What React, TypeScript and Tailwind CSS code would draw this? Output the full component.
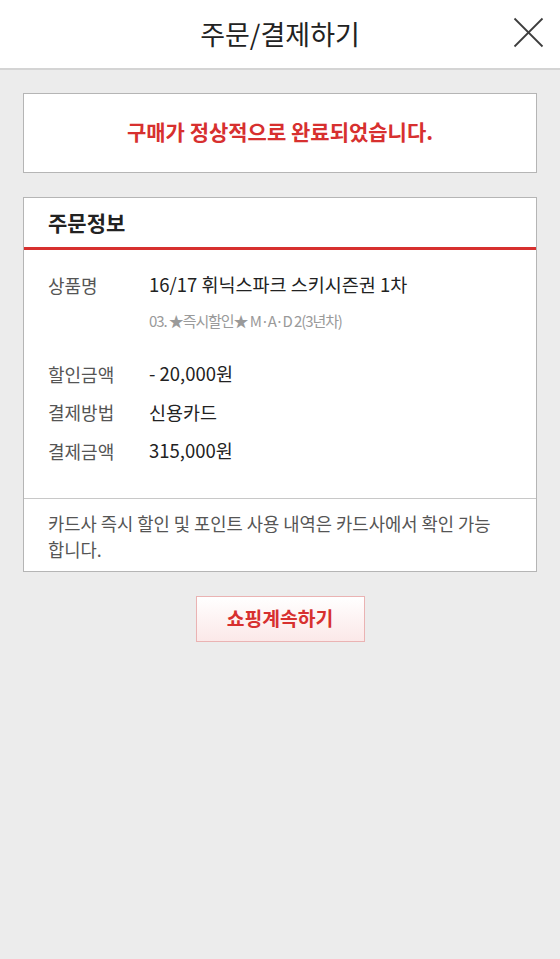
import React from "react";

const font = { fontFamily: '"Noto Sans CJK KR", "Noto Sans", Roboto, sans-serif' };

function Row({ label, value }: { label: string; value: string }) {
  return (
    <div className="flex h-[38.5px] items-center">
      <div className="w-[101px] text-[18px] text-[#555]">{label}</div>
      <div className="text-[18.5px] text-[#222]">{value}</div>
    </div>
  );
}

export default function App() {
  return (
    <div className="min-h-[959px] w-full bg-[#ececec]" style={font}>
      <header className="relative flex h-[70px] items-center justify-center border-b-2 border-[#d4d4d4] bg-white">
        <h1 className="text-[27px] leading-none text-[#222] -mt-[2px]">주문/결제하기</h1>
        <button className="absolute right-[16px] top-[17px] h-[31px] w-[31px]" aria-label="close">
          <svg viewBox="0 0 31 31" className="h-full w-full" fill="none" stroke="#3c3c3c" strokeWidth="1.8">
            <line x1="1.5" y1="1.5" x2="29.5" y2="29.5" />
            <line x1="29.5" y1="1.5" x2="1.5" y2="29.5" />
          </svg>
        </button>
      </header>

      <div className="px-[23px] pt-[23px]">
        <div className="flex h-[80px] items-center justify-center border border-[#b5b5b5] bg-white">
          <p className="-mt-[3px] text-[21px] font-bold leading-none text-[#d7302f]">구매가 정상적으로 완료되었습니다.</p>
        </div>

        <div className="mt-[24px] border border-[#b5b5b5] bg-white">
          <div className="flex h-[49px] items-center px-[24px]">
            <h2 className="text-[21px] font-bold leading-none text-[#222]">주문정보</h2>
          </div>
          <div className="h-[3px] bg-[#d7302f]" />
          <div className="px-[24px] pt-[23px] pb-[27px]">
            <div className="flex h-[24px] items-center">
              <div className="w-[101px] text-[18px] text-[#555]">상품명</div>
              <div className="text-[18.5px] text-[#222]">16/17 휘닉스파크 스키시즌권 1차</div>
            </div>
            <div className="mt-[13px] flex h-[22px] items-center pl-[101px] text-[15px] tracking-[-1.1px] text-[#9a9a9a]">
              03. ★즉시할인★ M·A·D 2(3년차)
            </div>
            <div className="mt-[23px]">
              <Row label="할인금액" value="- 20,000원" />
              <Row label="결제방법" value="신용카드" />
              <Row label="결제금액" value="315,000원" />
            </div>
          </div>
          <div className="h-px bg-[#c8c8c8]" />
          <div className="px-[24px] pt-[11px] pb-[9px] text-[17.7px] leading-[26px] text-[#555]">
            카드사 즉시 할인 및 포인트 사용 내역은 카드사에서 확인 가능
            <br />
            합니다.
          </div>
        </div>

        <div className="mt-[24px] flex justify-center">
          <button className="flex h-[46px] w-[169px] items-center justify-center border border-[#eab3b3] bg-gradient-to-b from-white to-[#fbe8e8] text-[19.3px] font-bold text-[#d7302f]">
            쇼핑계속하기
          </button>
        </div>
      </div>
    </div>
  );
}
